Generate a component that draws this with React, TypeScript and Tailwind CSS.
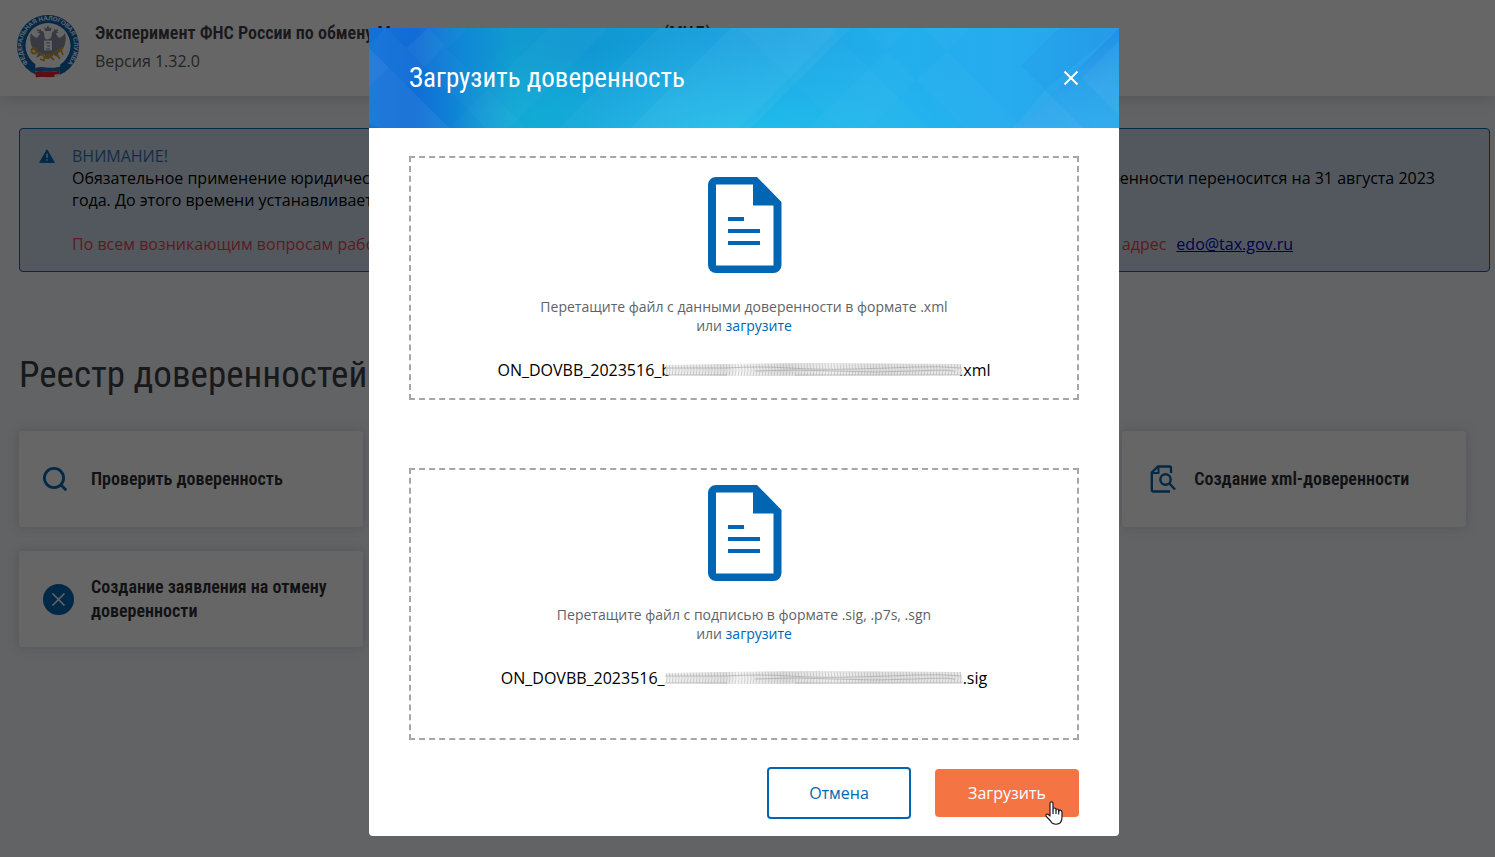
import type { ReactNode } from "react";

const DIN = "font-['Roboto_Condensed','Liberation_Sans_Narrow',Roboto,sans-serif]";

function Emblem() {
  return (
    <svg viewBox="0 0 64 64" className="h-16 w-16 shrink-0" role="img" aria-label="ФНС России">
      <defs>
        <path id="ring" d="M13 50A26 26 0 1 1 51 50" />
      </defs>
      <circle cx="32" cy="32" r="31" fill="#0a66b3" />
      <circle cx="32" cy="31.500" r="22.500" fill="#fff" />
      <text fill="#fff" fontSize="6.2" fontWeight="700" fontFamily="Liberation Sans, sans-serif">
        <textPath href="#ring" startOffset="1">ФЕДЕРАЛЬНАЯ НАЛОГОВАЯ СЛУЖБА</textPath>
      </text>
      <g fill="#8a93a3">
        <path d="M28 19c-1-3-5-3-6.500 0l2.500 0c-.5 3-2 3-3 5-3-1-5-3-6-5-2 7 0 17 7 20 0 1-1 3-2 5l8-4 3 5 2 0 3-5 8 4c-1-2-2-4-2-5 7-3 9-13 7-20-1 2-3 4-6 5-1-2-2.500-2-3-5l2.500 0c-1.500-3-5.500-3-6.500 0l-1 5-4 2-2-1z" />
        <path d="M29 17l-.5-4 2 1.500L32 11l1.500 3.500 2-1.500-.5 4z" />
        <path d="M21 17l0-2 2 1 2-1 0 2zM38 17l0-2 2 1 2-1 0 2z" />
      </g>
      <rect x="27.500" y="26" width="9" height="11" rx="1" fill="#fff" stroke="#7d8799" />
      <path d="M30 29h4M31 32h3M30 35h4" stroke="#7d8799" strokeWidth="1.200" />
      <g fill="none" stroke="#d6a22a" strokeWidth="1.800">
        <circle cx="18" cy="37" r="2.500" />
        <path d="M20 38l6 2 3 4 6-1 3-4 9-5M44 34l3 7M27 46l5-6 6 6M24 45l5 2M40 40l4 5" />
      </g>
      <path d="M19.500 49c7-4 14 2 25-2l-1 14c-9 3-15-1-22 1l1-3-3.500 1z" fill="#fff" />
      <path d="M19.300 54c8-3 14 2 25-1.500l-.4 4c-10 3-17-1-24.800 1z" fill="#1c6fb8" />
      <path d="M19 58c8-3 15 2 25-1.500l-.6 3.500-5 .8 0 2c-7 1-12-.5-18.400.8z" fill="#e0262f" />
    </svg>
  );
}

function SearchIcon() {
  return (
    <svg viewBox="0 0 24 24" className="h-6 w-6" fill="none" stroke="#0066b3" strokeWidth="2.800" aria-hidden="true">
      <circle cx="11" cy="11" r="9.600" />
      <path d="M17.500 17.500l5.800 5.800" />
    </svg>
  );
}

function CancelIcon() {
  return (
    <svg viewBox="0 0 31 31" className="h-[31px] w-[31px]" aria-hidden="true">
      <circle cx="15.500" cy="15.500" r="15.500" fill="#0066b3" />
      <path d="M9.500 9.500l12 12M21.500 9.500l-12 12" stroke="#fff" strokeWidth="1.500" />
    </svg>
  );
}

function FileSearchIcon() {
  return (
    <svg viewBox="0 0 26 28" className="h-7 w-[26px]" fill="none" stroke="#0066b3" strokeWidth="2.400" aria-hidden="true">
      <path d="M21 8V3a1.500 1.500 0 0 0-1.500-1.500H8L1.800 7.500V25a1.500 1.500 0 0 0 1.500 1.500H20" />
      <path d="M8.500 1.500v6.500H1.800" strokeWidth="2" />
      <circle cx="15.500" cy="14.500" r="5.200" />
      <path d="M19 18l6 6.500" />
    </svg>
  );
}

function DocumentIcon() {
  return (
    <svg viewBox="-2 0 76 96" className="h-24 w-[76px]" aria-hidden="true">
      <path
        fill="#0066b3"
        fillRule="evenodd"
        d="M8 0H49L73.500 25V88a8 8 0 0 1-8 8H8a8 8 0 0 1-8-8V8a8 8 0 0 1 8-8zM8 7.500V88.500H65.500V28.500H45V7.500z"
      />
      <path fill="#0066b3" d="M20 40h16v4H20zM20 52h32v4H20zM20 64h32v4H20z" />
    </svg>
  );
}

function Scribble({ id }: { id: string }) {
  return (
    <svg viewBox="0 0 298 14" className="relative h-3.5 w-[298px] shrink-0" aria-hidden="true">
      <defs>
        <pattern id={id} width="3" height="14" patternUnits="userSpaceOnUse">
          <path d="M1 0q2 7 0 14" stroke="#8c8c8c" strokeWidth=".8" fill="none" />
        </pattern>
        <linearGradient id={id + "-shade"}>
          <stop offset="0" stopColor="#f0f0f0" />
          <stop offset=".2" stopColor="#e2e2e2" />
          <stop offset=".24" stopColor="#f6f6f6" />
          <stop offset=".4" stopColor="#dcdcdc" />
          <stop offset=".55" stopColor="#f0f0f0" />
          <stop offset=".7" stopColor="#e0e0e0" />
          <stop offset="1" stopColor="#e8e8e8" />
        </linearGradient>
      </defs>
      <path d="M1 2L60 1 150 0 296 1 298 12 80 13 1 12z" fill={`url(#${id}-shade)`} />
      <path d="M1 2L60 1 150 0 296 1 298 12 80 13 1 12z" fill={`url(#${id})`} opacity=".4" />
      <path
        d="M0 12H62M130 12H297M0 5H60Q95 3 125 5T190 6 250 4 296 5M90 8Q130 6 170 8T250 8 290 9"
        fill="none"
        stroke="#949494"
        strokeWidth="1"
        opacity=".5"
      />
    </svg>
  );
}

function HandCursor() {
  return (
    <svg viewBox="0 0 18 24" className="pointer-events-none absolute top-8 left-[110px] h-6 w-[18px]" aria-hidden="true">
      <path
        d="M5 13V2.300Q5 .8 6.500 .8T8 2.300V9Q8 7 9.500 7T11 8.500V9.500Q11 8 12.300 8T13.700 9.500V10.500Q14 9 15.300 9.200T17 11V16.500Q17 20 15 22Q11 24.500 7 22Q5.500 19.500 1.300 15.500 .5 14 1.500 13.300 3 12.500 5 15z"
        fill="#fff"
        stroke="#1b1b2f"
        strokeWidth="1.200"
        strokeLinejoin="round"
      />
      <path d="M8 9v4M11 9.500V13M13.700 10v3.500" stroke="#1b1b2f" strokeWidth="1.200" />
    </svg>
  );
}

function HeaderPattern() {
  return (
    <svg viewBox="0 0 750 100" preserveAspectRatio="none" className="absolute inset-0 h-full w-full" aria-hidden="true">
      <defs>
        <linearGradient id="head-base" gradientUnits="userSpaceOnUse" x1="0" y1="0" x2="750" y2="0">
          <stop offset="0" stopColor="#1272d8" />
          <stop offset=".06" stopColor="#106cd6" />
          <stop offset=".12" stopColor="#0f86d6" />
          <stop offset=".19" stopColor="#119ad0" />
          <stop offset=".3" stopColor="#1098d2" />
          <stop offset=".5" stopColor="#18a0e0" />
          <stop offset=".7" stopColor="#22aeec" />
          <stop offset=".85" stopColor="#26acef" />
          <stop offset="1" stopColor="#2a9fea" />
        </linearGradient>
        <radialGradient id="head-cyan" gradientUnits="userSpaceOnUse" cx="0" cy="0" r="1" gradientTransform="translate(370 120) scale(280 115)">
          <stop offset="0" stopColor="#24c8f0" stopOpacity=".85" />
          <stop offset="1" stopColor="#22c0ee" stopOpacity="0" />
        </radialGradient>
        <radialGradient id="head-teal" gradientUnits="userSpaceOnUse" cx="0" cy="0" r="1" gradientTransform="translate(165 100) scale(80 90)">
          <stop offset="0" stopColor="#10b0d4" stopOpacity=".7" />
          <stop offset="1" stopColor="#10b0d4" stopOpacity="0" />
        </radialGradient>
        <linearGradient id="head-corner" gradientUnits="userSpaceOnUse" x1="715" y1="10" x2="750" y2="90">
          <stop offset="0" stopColor="#1c86e2" stopOpacity=".7" />
          <stop offset=".5" stopColor="#2ea4ea" stopOpacity=".6" />
          <stop offset="1" stopColor="#3cb4f0" stopOpacity=".5" />
        </linearGradient>
      </defs>
      <path fill="url(#head-base)" d="M0 0h750v100H0z" />
      <path fill="url(#head-cyan)" d="M0 0h750v100H0z" />
      <path fill="url(#head-teal)" d="M0 0h750v100H0z" />
      <path fill="url(#head-corner)" d="M750 0v100H650z" />
      <g fill="#fff">
        <path fillOpacity=".06" d="M0 20L38 58 0 96zM38 58L80 100H10L0 96z" />
        <path fillOpacity=".03" d="M17 0L38 21 0 59V17zM59 0L76 17 38 58 17 38z" />
        <path fillOpacity=".025" d="M38 21L117 100h40L78 21 99 0H59z" />
        <path fillOpacity=".025" d="M80 100L180 0h60L140 100z" />
        <path fillOpacity=".03" d="M190 100L290 0H400L300 100z" />
        <path fillOpacity=".04" d="M262 100L362 0h120L382 100z" />
        <path fillOpacity=".03" d="M300 100L400 0h70L370 100z" />
        <path fillOpacity=".02" d="M370 0L470 100h60L430 0zM400 0L500 100h60L460 0z" />
        <path fillOpacity=".02" d="M495 0L595 100h60L555 0zM440 100L540 0h60L500 100z" />
        <path fillOpacity=".04" d="M676 62L714 100h-70zM713 50L750 87V13z" />
      </g>
      <path fill="#05c" opacity=".05" d="M652 38L690 0h60L676 62z" />
    </svg>
  );
}

function ActionCard({ icon, children }: { icon: ReactNode; children: ReactNode }) {
  return (
    <button
      type="button"
      className={`flex h-24 items-center rounded-[3px] bg-white px-6 text-left text-[18px] leading-6 font-semibold text-[#2b2d33] shadow-[0_0_12px_rgba(40,60,110,0.2)] ${DIN}`}
    >
      <span className="w-12 shrink-0">{icon}</span>
      <span>{children}</span>
    </button>
  );
}

type DropZoneProps = { id: string; hint: string; className: string; children: ReactNode };

function DropZone({ id, hint, className, children }: DropZoneProps) {
  return (
    <div className={`flex flex-col items-center border-2 border-dashed border-[#a3a6ab] text-center ${className}`}>
      <DocumentIcon />
      <p className="mt-6 text-[14px] leading-[19px] text-[#5f6368]">
        {hint}
        <br />
        или{" "}
        <label htmlFor={id} className="cursor-pointer text-[#0066b3]">
          загрузите
        </label>
      </p>
      <input id={id} type="file" className="sr-only" />
      <p className="mt-6 flex items-center text-[16px] leading-[22px] text-black">{children}</p>
    </div>
  );
}

export default function App() {
  return (
    <div className="min-h-screen bg-[#f5f7fb] font-['Open_Sans','Noto_Sans',sans-serif] text-[#3a3d42]">
      <header className="flex h-24 items-start gap-[15px] bg-white px-4 pt-3.5 shadow-[0_2px_16px_rgba(0,0,0,0.15)]">
        <Emblem />
        <div className="pt-[7px]">
          <h1 className={`text-[18px] leading-6 font-semibold whitespace-nowrap text-[#3c4046] ${DIN}`}>
            Эксперимент ФНС России по обмену Машиночитаемыми доверенностями (МЧД)
          </h1>
          <p className="mt-[5px] text-[16px] leading-[22px] text-[#555a60]">Версия 1.32.0</p>
        </div>
      </header>

      <main className="pt-8 pr-[5px] pl-[19px]">
        <section className="flex rounded border border-[#0066b3] bg-[#cddcec] py-4 pr-10 pl-[19px] text-[16px] leading-[22px]">
          <svg viewBox="0 0 16 14" className="mt-1 mr-[17px] h-3.5 w-4 shrink-0" aria-hidden="true">
            <path d="M8 .8L15.300 13.400H.7z" fill="#0066b3" stroke="#0066b3" strokeLinejoin="round" />
            <path d="M8 4.500v4.500M8 10.300v1.500" stroke="#cddcec" strokeWidth="1.400" />
          </svg>
          <div>
            <p className="text-[#2f74ad]">ВНИМАНИЕ!</p>
            <p className="text-black">
              Обязательное применение юридическими лицами и индивидуальными предпринимателями машиночитаемой
              официальной доверенности переносится на 31 августа 2023 года. До этого времени устанавливается переходный период.
            </p>
            <p className="mt-[22px] text-[#e0484d]">
              По всем возникающим вопросам работы сервиса просьба направлять обращения с подробным описанием ошибки на
              электронный адрес
              <a href="mailto:edo@tax.gov.ru" className="ml-2.5 text-[#0000c8] underline">
                edo@tax.gov.ru
              </a>
            </p>
          </div>
        </section>

        <h2 className={`mt-[79px] text-[37px] leading-[48px] text-[#3c4046] ${DIN}`}>Реестр доверенностей</h2>

        <div className="mt-8 grid grid-cols-4 gap-6 pr-6">
          <ActionCard icon={<SearchIcon />}>Проверить доверенность</ActionCard>
          <ActionCard icon={<FileSearchIcon />}>Загрузить доверенность</ActionCard>
          <ActionCard icon={<FileSearchIcon />}>Отменить доверенность</ActionCard>
          <ActionCard icon={<span className="ml-1 block"><FileSearchIcon /></span>}>Создание xml-доверенности</ActionCard>
          <ActionCard icon={<CancelIcon />}>Создание заявления на отмену доверенности</ActionCard>
        </div>
      </main>

      <div className="fixed inset-0 flex items-start justify-center overflow-auto bg-black/60 pt-7 pr-[7px]">
        <div role="dialog" aria-modal="true" aria-labelledby="upload-title" className="w-full max-w-[750px] overflow-hidden rounded-b bg-white">
          <div className="relative flex h-[100px] items-center justify-between px-10">
            <HeaderPattern />
            <h2 id="upload-title" className={`relative text-[27px] leading-9 text-white ${DIN}`}>
              Загрузить доверенность
            </h2>
            <button type="button" aria-label="Закрыть" className="relative">
              <svg viewBox="0 0 16 16" className="h-4 w-4" stroke="#fff" strokeWidth="2" aria-hidden="true">
                <path d="M1.500 1.500l13 13M14.500 1.500l-13 13" />
              </svg>
            </button>
          </div>
          <div className="px-10 pt-7 pb-[17px]">
            <DropZone id="xml-file" className="pt-[19px] pb-[17px]" hint="Перетащите файл с данными доверенности в формате .xml">
              <span>ON_DOVBB_2023516_b</span>
              <span className="-ml-1.5 flex">
                <Scribble id="xml-scribble" />
              </span>
              <span className="-ml-1">.xml</span>
            </DropZone>
            <DropZone id="sig-file" className="mt-[68px] pt-[15px] pb-[49px]" hint="Перетащите файл с подписью в формате .sig, .p7s, .sgn">
              <span>ON_DOVBB_2023516_</span>
              <Scribble id="sig-scribble" />
              <span>.sig</span>
            </DropZone>
            <div className="mt-[27px] flex items-center justify-end gap-6">
              <button type="button" className="h-[52px] w-36 rounded border-2 border-[#0066b3] text-[16px] text-[#0066b3]">
                Отмена
              </button>
              <div className="relative">
                <button type="button" className="h-12 w-36 rounded bg-[#f47444] text-[16px] text-white">
                  Загрузить
                </button>
                <HandCursor />
              </div>
            </div>
          </div>
        </div>
      </div>
    </div>
  );
}
